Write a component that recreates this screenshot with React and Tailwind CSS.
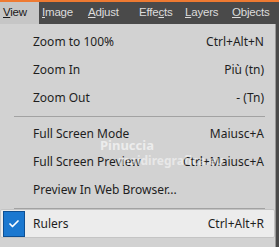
import { Check } from "lucide-react";

const items = [
  { label: "Zoom to 100%", key: "Ctrl+Alt+N" },
  { label: "Zoom In", key: "Più (tn)" },
  { label: "Zoom Out", key: "- (Tn)" },
  "sep",
  { label: "Full Screen Mode", key: "Maiusc+A" },
  { label: "Full Screen Preview", key: "Ctrl+Maiusc+A" },
  { label: "Preview In Web Browser...", key: "" },
  "sep",
];

const menus = [
  { parts: ["", "V", "iew"], w: "w-[39px]" },
  { parts: ["", "I", "mage"], w: "w-[46px]" },
  { parts: ["", "A", "djust"], w: "w-[51px]" },
  { parts: ["Effe", "c", "ts"], w: "w-[46px]" },
  { parts: ["", "L", "ayers"], w: "w-[47px]" },
  { parts: ["", "O", "bjects"], w: "w-[47px]" },
];

function App() {
  return (
    <div className="w-[279px] h-[247px] bg-[#4a4a4a] flex flex-col overflow-hidden relative text-[12px]" style={{ fontFamily: '"Noto Sans", "DejaVu Sans", sans-serif' }}>
      <div className="h-[2px] bg-[#ee7a32]" />
      <div className="h-[22px] flex items-center text-[#dcdcdc] text-[11.5px] tracking-[-0.2px]" style={{ fontFamily: '"Liberation Sans", sans-serif' }}>
        {menus.map((m, i) => (
          <div key={i} className={`${m.w} shrink-0 h-full flex items-center pl-[3px] ${i === 0 ? "bg-[#c6c6c6] text-[#1a1a1a]" : ""}`}>
            <span>{m.parts[0]}<u>{m.parts[1]}</u>{m.parts[2]}</span>
          </div>
        ))}
      </div>
      <div className="w-[276px] flex-1 bg-[#d2d2d2] border-r border-[#9a9a9a] flex flex-col pt-[4px] text-[#1e1e1e]">
        {items.map((it, i) =>
          it === "sep" ? (
            <div key={i} className="h-[8px] flex items-center pl-[14px] pr-[10px]">
              <div className="h-px w-full bg-[#a2a2a2]" />
            </div>
          ) : (
            <div key={i} className="h-[28px] flex items-center justify-between pl-[33px] pr-[11px]">
              <span>{it.label}</span>
              <span>{it.key}</span>
            </div>
          )
        )}
        <div className="h-[29px] mt-[-3px] flex items-center justify-between bg-[#ececec] border border-[#c4c4c4] rounded-[2px] pr-[10px]">
          <div className="flex items-center">
            <div className="w-[22px] h-[26px] ml-[2px] bg-[#1b78d0] border border-[#0d4f93] flex items-center justify-center">
              <Check size={12} strokeWidth={3.5} color="white" />
            </div>
            <span className="ml-[8px]">Rulers</span>
          </div>
          <span>Ctrl+Alt+R</span>
        </div>
      </div>
      <div className="absolute left-[100px] top-[136px] text-white/60 font-bold text-[13px] pointer-events-none">Pinuccia</div>
      <div className="absolute left-[118px] top-[152px] text-white/50 font-bold text-[12px] pointer-events-none">maidiregrafica.eu</div>
    </div>
  );
}

export default App;
